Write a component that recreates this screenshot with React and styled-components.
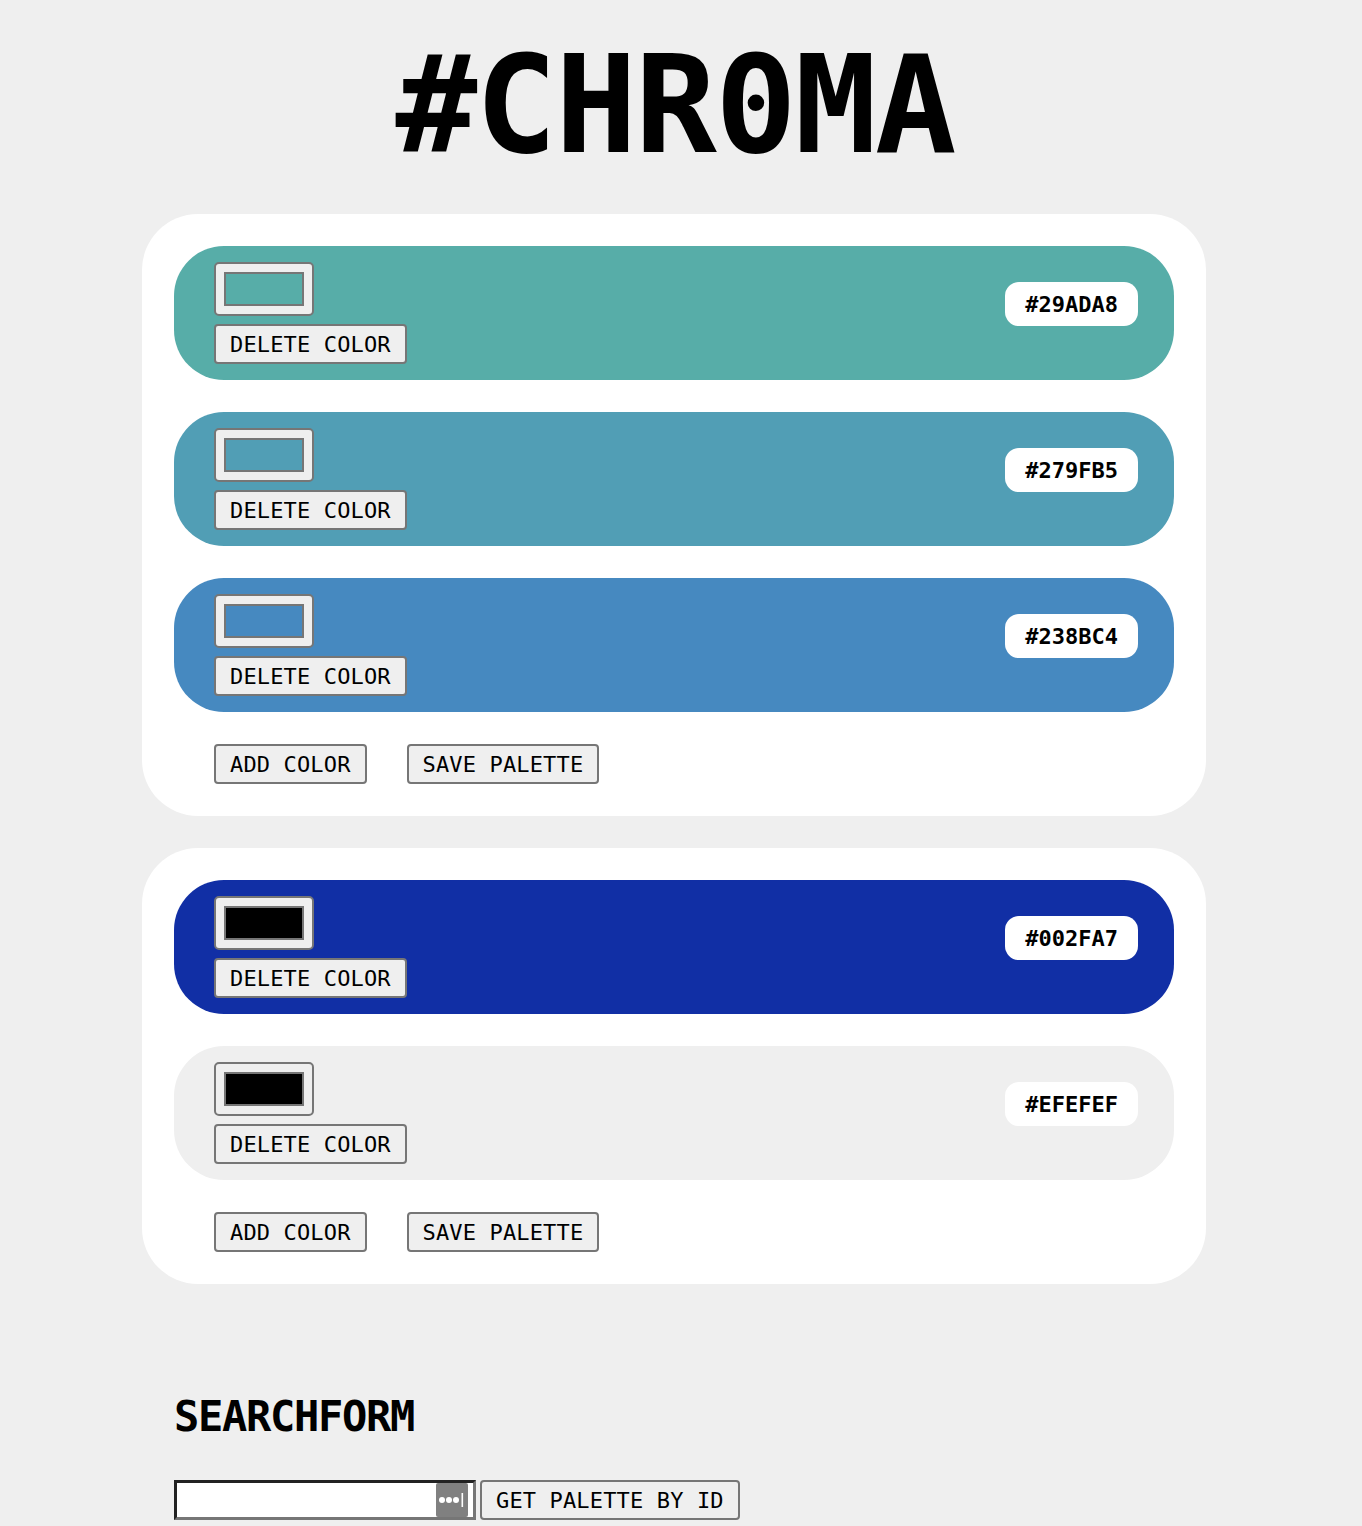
import React from 'react'
import styled, { createGlobalStyle } from 'styled-components'

const GlobalStyle = createGlobalStyle`
  body {
    margin: 0;
    background: #efefef;
    font-family: "DejaVu Sans Mono", "Liberation Mono", monospace;
    color: #000;
  }
`

const palettes = [
  [
    { hex: '#29ADA8', bg: '#57ada8', swatch: '#57ada8' },
    { hex: '#279FB5', bg: '#519eb5', swatch: '#519eb5' },
    { hex: '#238BC4', bg: '#4689c0', swatch: '#4689c0' },
  ],
  [
    { hex: '#002FA7', bg: '#112fa5', swatch: '#000000' },
    { hex: '#EFEFEF', bg: '#efefef', swatch: '#000000' },
  ],
]

const Page = styled.div`
  padding-top: 30px;
  padding-bottom: 6px;
`

const Title = styled.h1`
  margin: 0 0 34px;
  text-align: center;
  font-size: 136px;
  line-height: 150px;
  font-weight: bold;
  letter-spacing: -2px;
  padding-right: 12px;
`

const Palettes = styled.div`
  display: flex;
  flex-direction: column;
  gap: 32px;
  width: 1064px;
  margin-left: 142px;
`

const Card = styled.div`
  background: #fff;
  border-radius: 56px;
  padding: 32px;
  display: flex;
  flex-direction: column;
  gap: 32px;
`

const Row = styled.div`
  height: 134px;
  box-sizing: border-box;
  border-radius: 50px;
  background: ${p => p.$bg};
  padding: 16px 36px 0 40px;
  display: flex;
  justify-content: space-between;
  align-items: flex-start;
`

const Controls = styled.div`
  display: flex;
  flex-direction: column;
  align-items: flex-start;
  gap: 8px;
`

const Swatch = styled.div`
  width: 100px;
  height: 54px;
  box-sizing: border-box;
  background: #efefef;
  border: 2px solid #767676;
  border-radius: 5px;
  padding: 8px;
`

const SwatchFill = styled.div`
  height: 100%;
  box-sizing: border-box;
  border: 2px solid #767676;
  background: ${p => p.$color};
`

const Button = styled.button`
  height: 40px;
  box-sizing: border-box;
  padding: 0 14px;
  background: #efefef;
  border: 2px solid #767676;
  border-radius: 4px;
  font-family: "DejaVu Sans Mono", "Liberation Mono", monospace;
  font-size: 22px;
  letter-spacing: 0.15px;
  color: #000;
  white-space: pre;
`

const HexLabel = styled.div`
  margin-top: 20px;
  height: 44px;
  box-sizing: border-box;
  padding: 0 20px;
  background: #fff;
  border-radius: 14px;
  display: flex;
  align-items: center;
  font-size: 22px;
  font-weight: bold;
`

const Actions = styled.div`
  display: flex;
  gap: 40px;
  padding-left: 40px;
`

const Search = styled.div`
  margin: 108px 0 0 174px;
`

const SearchTitle = styled.h2`
  margin: 0 0 38px;
  font-size: 42px;
  line-height: 50px;
  font-weight: bold;
  letter-spacing: -1.3px;
`

const SearchRow = styled.div`
  display: flex;
  gap: 4px;
`

const InputWrap = styled.div`
  position: relative;
  width: 302px;
  height: 40px;
`

const Input = styled.input`
  width: 100%;
  height: 100%;
  box-sizing: border-box;
  background: #fff;
  border-style: solid;
  border-width: 3px;
  border-color: #222 #767676 #767676 #222;
  outline: none;
  font-family: inherit;
  font-size: 20px;
  padding: 0 40px 0 4px;
`

const AutofillIcon = styled.span`
  position: absolute;
  right: 8px;
  top: 3px;
  width: 32px;
  height: 34px;
  background: #808080;
  border-radius: 2px;
  display: flex;
  align-items: center;
  justify-content: center;
`

const ColorRow = ({ color }) => (
  <Row $bg={color.bg}>
    <Controls>
      <Swatch>
        <SwatchFill $color={color.swatch} />
      </Swatch>
      <Button>DELETE COLOR</Button>
    </Controls>
    <HexLabel>{color.hex}</HexLabel>
  </Row>
)

export default function App() {
  return (
    <Page>
      <GlobalStyle />
      <Title>#CHR0MA</Title>
      <Palettes>
        {palettes.map((colors, i) => (
          <Card key={i}>
            {colors.map(c => (
              <ColorRow key={c.hex} color={c} />
            ))}
            <Actions>
              <Button>ADD COLOR</Button>
              <Button>SAVE PALETTE</Button>
            </Actions>
          </Card>
        ))}
      </Palettes>
      <Search>
        <SearchTitle>SEARCHFORM</SearchTitle>
        <SearchRow>
          <InputWrap>
            <Input type="text" />
            <AutofillIcon>
              <svg width="28" height="16" viewBox="0 0 28 16">
                <circle cx="4" cy="8" r="3" fill="#fff" />
                <circle cx="11" cy="8" r="3" fill="#fff" />
                <circle cx="18" cy="8" r="3" fill="#fff" />
                <rect x="23.5" y="1" width="1.6" height="14" fill="#fff" />
              </svg>
            </AutofillIcon>
          </InputWrap>
          <Button>GET PALETTE BY ID</Button>
        </SearchRow>
      </Search>
    </Page>
  )
}
